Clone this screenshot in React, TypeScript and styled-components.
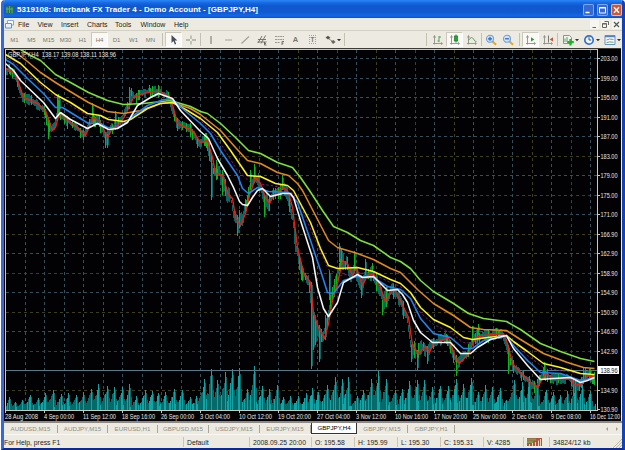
import type { ReactNode } from "react";
import styled, { createGlobalStyle } from "styled-components";

type Point = [number, number];

const timeframes = ["M1", "M5", "M15", "M30", "H1", "H4", "D1", "W1", "MN"];
const menus = [
  { name: "File", width: 19.5 },
  { name: "View", width: 23.5 },
  { name: "Insert", width: 26 },
  { name: "Charts", width: 28 },
  { name: "Tools", width: 25.5 },
  { name: "Window", width: 33.5 },
  { name: "Help", width: 20 },
];
const tabs = [
  { name: "AUDUSD,M15", width: 54 },
  { name: "AUDJPY,M15", width: 50 },
  { name: "EURUSD,H1", width: 50 },
  { name: "GBPUSD,M15", width: 51 },
  { name: "USDJPY,M15", width: 51 },
  { name: "EURJPY,M15", width: 51 },
  { name: "GBPJPY,H4", width: 46 },
  { name: "GBPJPY,M15", width: 51 },
  { name: "GBPJPY,H1", width: 47 },
];
const prices = [
  "203.00", "199.00", "195.00", "191.00", "187.00", "183.00", "179.00",
  "175.00", "171.00", "166.90", "162.90", "158.90", "154.90", "150.90",
  "146.90", "142.90", "", "134.90", "130.90",
];
const dates = [
  "28 Aug 2008", "4 Sep 00:00", "11 Sep 12:00", "18 Sep 16:00",
  "26 Sep 00:00", "3 Oct 04:00", "10 Oct 12:00", "19 Oct 20:00",
  "27 Oct 04:00", "3 Nov 12:00", "10 Nov 16:00", "17 Nov 20:00",
  "25 Nov 00:00", "2 Dec 04:00", "9 Dec 08:00", "16 Dec 12:00",
];

const green: Point[] = [[20, 49], [30, 55], [40, 60], [55, 74], [70, 82], [88, 92], [107, 100], [123, 104], [143, 103], [170, 100], [190, 106], [200, 111], [207, 113], [220, 123], [235, 137], [248, 150], [260, 153], [277, 162], [292, 167], [300, 177], [309, 190], [322, 210], [333, 226], [347, 232], [360, 240], [373, 245], [390, 257], [400, 261], [410, 268], [420, 280], [433, 291], [453, 303], [468, 313], [483, 318], [506, 321], [520, 329], [540, 343], [560, 351], [580, 358], [594, 361]];
const orange: Point[] = [[11, 49], [27, 61], [40, 72], [55, 82], [68, 90], [88, 102], [107, 111], [123, 113], [140, 110], [160, 103], [172, 102], [190, 108], [200, 114], [220, 130], [235, 147], [247, 160], [260, 163], [277, 172], [288, 175], [297, 183], [302, 190], [315, 215], [328, 240], [337, 247], [357, 253], [373, 259], [390, 268], [400, 272], [417, 289], [433, 303], [453, 315], [470, 327], [483, 329], [506, 330], [520, 339], [543, 353], [567, 362], [583, 367], [594, 368]];
const yellow: Point[] = [[5, 54], [20, 63], [40, 82], [55, 94], [70, 102], [87, 113], [100, 115], [108, 119], [123, 121], [130, 119], [147, 108], [160, 103], [172, 102], [187, 110], [200, 118], [217, 132], [230, 150], [247, 175], [260, 176], [275, 183], [287, 185], [293, 190], [310, 222], [320, 248], [328, 265], [337, 268], [357, 267], [373, 271], [390, 279], [400, 283], [410, 292], [420, 307], [433, 319], [450, 327], [463, 337], [472, 339], [487, 337], [506, 335], [513, 341], [527, 351], [543, 363], [560, 367], [580, 373], [594, 374]];
const violet: Point[] = [[5, 56], [20, 67], [55, 97], [70, 105], [90, 117], [115, 124], [125, 122], [147, 107], [162, 101], [172, 101], [187, 110], [200, 120], [215, 135], [237, 170], [250, 182], [270, 185], [288, 188], [300, 205], [315, 240], [328, 269], [340, 275], [357, 272], [373, 274], [390, 282], [400, 286], [420, 312], [433, 324], [450, 332], [463, 342], [475, 343], [506, 336], [527, 355], [543, 367], [560, 370], [594, 375]];
const blue: Point[] = [[5, 59], [13, 64], [27, 78], [43, 93], [55, 107], [62, 107], [88, 123], [100, 123], [107, 127], [117, 127], [123, 124], [133, 115], [147, 105], [163, 99], [172, 99], [183, 109], [200, 123], [210, 133], [220, 150], [237, 175], [242, 188], [248, 193], [257, 187], [268, 191], [288, 192], [297, 202], [310, 240], [320, 270], [327, 292], [333, 293], [343, 280], [357, 276], [373, 277], [387, 286], [400, 289], [410, 298], [420, 318], [433, 333], [450, 337], [463, 348], [472, 348], [483, 340], [500, 336], [506, 336], [513, 345], [527, 360], [540, 372], [560, 373], [580, 380], [594, 377]];
const white: Point[] = [[5, 63], [13, 70], [20, 80], [43, 102], [55, 118], [60, 112], [70, 119], [87, 128], [97, 123], [108, 129], [117, 128], [127, 122], [137, 105], [150, 97], [158, 93], [172, 98], [180, 110], [200, 131], [208, 138], [217, 158], [227, 175], [233, 187], [239, 201], [242, 204], [247, 205], [252, 197], [257, 190], [262, 188], [270, 196], [282, 193], [290, 193], [293, 197], [300, 220], [312, 257], [317, 287], [323, 308], [328, 316], [337, 302], [343, 282], [357, 274], [362, 277], [373, 276], [387, 290], [397, 289], [402, 294], [407, 302], [413, 320], [420, 332], [432, 342], [450, 342], [460, 353], [470, 353], [477, 347], [490, 339], [506, 335], [513, 348], [527, 365], [540, 379], [553, 378], [570, 377], [580, 382], [587, 380], [594, 377]];
const red: Point[] = [[5, 68], [15, 73], [23, 97], [37, 103], [45, 110], [52, 130], [55, 127], [59, 112], [67, 120], [77, 127], [85, 135], [93, 117], [100, 122], [107, 137], [112, 128], [120, 123], [127, 110], [133, 97], [143, 93], [153, 91], [160, 91], [170, 97], [177, 123], [183, 126], [192, 130], [200, 142], [207, 140], [212, 157], [215, 173], [222, 175], [228, 194], [232, 198], [235, 217], [240, 225], [245, 213], [249, 195], [255, 177], [260, 183], [265, 197], [269, 203], [273, 195], [283, 187], [288, 192], [292, 207], [297, 247], [303, 272], [310, 282], [313, 313], [318, 327], [324, 338], [328, 323], [332, 300], [337, 283], [342, 260], [347, 263], [352, 275], [356, 267], [362, 285], [367, 275], [373, 273], [380, 287], [385, 301], [393, 288], [400, 300], [408, 317], [412, 345], [418, 353], [425, 346], [429, 352], [433, 343], [448, 337], [455, 357], [459, 363], [468, 353], [475, 337], [483, 335], [503, 333], [507, 343], [512, 363], [520, 372], [528, 380], [537, 387], [545, 373], [555, 379], [570, 377], [574, 385], [582, 383], [587, 375], [594, 377]];

// single long wicks: x, top, bottom
const spikes = [
  [48, 117, 139], [49, 120, 132], [57, 96, 118], [58, 94, 114], [59, 96, 112], [92, 103, 122],
  [105, 134, 148], [107, 134, 148], [115, 111, 124], [129, 87, 103], [131, 88, 96],
  [149, 85, 92], [211, 160, 200], [216, 160, 180], [222, 170, 195], [237, 215, 236], [239, 210, 228],
  [250, 170, 190], [254, 164, 178], [264, 195, 217], [282, 175, 190],
  [311, 282, 369], [313, 315, 350], [315, 320, 345], [319, 325, 362], [325, 315, 340],
  [329, 270, 300], [339, 243, 262], [341, 248, 266], [354, 251, 266], [361, 285, 298],
  [365, 259, 275], [372, 263, 272], [382, 300, 315], [411, 345, 362], [417, 350, 371], [427, 352, 364],
  [456, 362, 376], [472, 326, 342], [478, 324, 335], [508, 345, 374], [529, 376, 391],
  [537, 386, 396], [544, 362, 374], [573, 380, 396], [583, 367, 384], [585, 368, 380], [590, 368, 376],
];

const volumePeaks: Point[] = [[5, 5], [9, 13], [15, 8], [22, 10], [30, 15], [38, 12], [45, 17], [53, 20], [61, 16], [68, 17], [76, 15], [83, 18], [91, 21], [98, 26], [107, 24], [114, 23], [122, 23], [129, 26], [136, 14], [145, 20], [152, 19], [158, 17], [165, 18], [174, 21], [182, 20], [190, 13], [196, 14], [204, 31], [211, 41], [217, 30], [225, 38], [232, 41], [239, 42], [247, 21], [254, 44], [262, 24], [269, 21], [277, 25], [283, 13], [290, 14], [298, 14], [306, 17], [312, 22], [318, 18], [327, 25], [335, 33], [342, 31], [348, 33], [357, 14], [363, 20], [371, 31], [378, 39], [386, 31], [395, 20], [402, 21], [409, 29], [417, 30], [424, 30], [432, 23], [440, 24], [448, 24], [456, 31], [463, 26], [471, 32], [478, 18], [485, 25], [492, 23], [500, 22], [506, 10], [514, 30], [522, 28], [529, 29], [537, 31], [546, 20], [553, 18], [560, 15], [567, 19], [575, 25], [582, 25], [590, 19], [597, 8]];

const noise = (n: number) => {
  const v = Math.sin(n * 127.1 + 11.7) * 43758.5453;
  return v - Math.floor(v);
};

const valueAt = (line: Point[], x: number) => {
  for (let i = 1; i < line.length; i++) {
    if (x <= line[i][0]) {
      const [x0, y0] = line[i - 1];
      const [x1, y1] = line[i];
      return y0 + ((x - x0) / (x1 - x0)) * (y1 - y0);
    }
  }
  return line[line.length - 1][1];
};

const toPoints = (line: Point[]) => line.map(([x, y]) => `${x + 0.5},${y + 0.5}`).join(" ");

const buildCandles = () => {
  let body = "";
  let wick = "";
  for (let x = 6; x < 595; x++) {
    const mid = valueAt(red, Math.min(x + 1.5, 594));
    const amp = x < 200 ? 5 : x < 430 ? 8 : 5.5;
    // neighbouring bars share their range so that bodies read as two pixels wide
    const n = Math.floor(x / 2);
    const top = Math.round(mid - 1 - noise(n) * amp);
    const bottom = Math.round(mid + 1 + noise(n + 700) * amp);
    if (noise(x + 300) > 0.8) wick += `M${x + 0.5} ${top - 1}V${bottom + 2}`;
    else body += `M${x + 0.5} ${top}V${bottom}`;
  }
  spikes.forEach(([x, y0, y1]) => {
    wick += `M${x + 0.5} ${y0}V${y1}`;
    body += `M${x + 1.5} ${y0 + 3}V${y1 - 3}`;
  });
  return { body, wick };
};

const buildVolume = () => {
  let dark = "";
  let light = "";
  for (let i = 1; i < volumePeaks.length; i++) {
    const [x0, h0] = volumePeaks[i - 1];
    const [x1, h1] = volumePeaks[i];
    for (let x = x0 + 1; x <= x1; x++) {
      if (x > 595) break;
      const t = (x - x0) / (x1 - x0);
      const h = x === x1 ? h1 : h1 * (0.12 + 0.72 * t * t + noise(x) * 0.15) + 1;
      const seg = `M${x + 0.5} 410V${Math.round(410 - h)}`;
      if (x === x1 || noise(x + 50) > 0.72) light += seg;
      else dark += seg;
      if (x === x0 + 1) dark += `M${x + 0.5} 410V${Math.round(410 - h0 * 0.86)}`;
      if (x === x0 + 2) dark += `M${x + 0.5} 410V${Math.round(410 - h0 * 0.5)}`;
    }
  }
  return { dark, light };
};

const candles = buildCandles();
const volume = buildVolume();

const GlobalStyle = createGlobalStyle`
  body {
    margin: 0;
    background: #fff;
    overflow: hidden;
    font-family: "Liberation Sans", Arial, sans-serif;
  }
`;

const Chart = () => {
  const rows = prices.map((_, i) => Math.round(58 + i * 19.5));
  const cols = Array.from({ length: 30 }, (_, i) => Math.floor(25 + i * 19.5));
  return (
    <ChartSvg viewBox="4 48 617 373" width="617" height="373">
      <rect x="4" y="48" width="617" height="373" fill="#020204" />
      <g fill="none" strokeWidth="1" strokeDasharray="3 3" shapeRendering="crispEdges">
        {rows.slice(0, 18).map((y, i) => (
          <path key={y} d={`M6 ${y + 0.5}H597`} stroke={i > 4 && i % 2 ? "#3e3e1a" : "#35505a"} />
        ))}
        {cols.map((x, i) => (
          <path key={x} d={`M${x + 0.5} 50V410`} stroke={i > 12 && i % 2 === 0 ? "#40401c" : "#35505a"} />
        ))}
      </g>
      <g fill="none" strokeWidth="1" shapeRendering="crispEdges">
        <path d={volume.dark} stroke="#056a6a" />
        <path d={volume.light} stroke="#12a3a5" />
        <path d="M5 370.5H597" stroke="#587a88" />
        <path d={candles.body} stroke="#0b6763" />
        <path d={candles.wick} stroke="#0eb41f" />
      </g>
      <g fill="none" strokeWidth="1.55" strokeLinejoin="round">
        <polyline points={toPoints(violet)} stroke="#7b1a74" strokeDasharray="2.5 2" strokeWidth="1" />
        <polyline points={toPoints(red)} stroke="#ee1c16" strokeWidth="1.4" />
        <polyline points={toPoints(green)} stroke="#7fe03c" />
        <polyline points={toPoints(orange)} stroke="#e08a1c" />
        <polyline points={toPoints(yellow)} stroke="#fbf022" />
        <polyline points={toPoints(blue)} stroke="#2484ee" />
        <polyline points={toPoints(white)} stroke="#f6f6f6" />
      </g>
      <g fill="none" strokeWidth="1" shapeRendering="crispEdges">
        <path d="M5 49.5H597.5V410.5H5.5V50" stroke="#c9c9bd" />
        {rows.map((y) => (
          <path key={y} d={`M598 ${y + 0.5}h2`} stroke="#c9c9bd" />
        ))}
        {dates.map((d, i) => (
          <path key={d} d={`M${Math.floor(5 + i * 39) + 0.5} 411v2`} stroke="#c9c9bd" />
        ))}
        <path d="M4 48.5H621" stroke="#3c3c38" />
      </g>
      <g fill="#e6e6e2" fontSize="6.8" fontFamily='"Liberation Sans", Arial, sans-serif'>
        <text x="8" y="57" textLength="108" lengthAdjust="spacingAndGlyphs">
          GBPJPY,H4&#160; 138.17 139.08 138.11 138.96
        </text>
        {prices.map((p, i) =>
          p ? (
            <text key={p} x="600.5" y={rows[i] + 2.8} textLength="17" lengthAdjust="spacingAndGlyphs">
              {p}
            </text>
          ) : null
        )}
        {dates.map((d, i) => (
          <text
            key={d}
            x={5 + i * 39}
            y="418.5"
            textLength={(d.length === 11 && i) || i === 15 ? 30 : 33}
            lengthAdjust="spacingAndGlyphs"
          >
            {d}
          </text>
        ))}
      </g>
      <rect x="598" y="366" width="21" height="8" fill="#fff" />
      <text
        x="600.5"
        y="372.7"
        fontSize="6.8"
        fill="#111"
        fontFamily='"Liberation Sans", Arial, sans-serif'
        textLength="17"
        lengthAdjust="spacingAndGlyphs"
      >
        138.96
      </text>
    </ChartSvg>
  );
};

const Icon = ({ children, width = 14 }: { children: ReactNode; width?: number }) => (
  <svg width={width} height="12" viewBox={`0 0 ${width} 12`} fill="none">
    {children}
  </svg>
);

const AxisMark = () => <path d="M3.5 2v8.5M2 9.5h9M2.5 3.5l1-2 1 2M10 8.3l1.5 1.2-1.5 1.2" stroke="#8f9088" strokeWidth=".9" />;

const Lens = ({ plus }: { plus?: boolean }) => (
  <Icon>
    <path d="M8.5 7.5l3.6 3.2" stroke="#dba72d" strokeWidth="2" />
    <circle cx="6" cy="4.8" r="3.5" fill="#cfe4fb" stroke="#76a0d8" strokeWidth="1.1" />
    <path d={plus ? "M4 4.8h4M6 2.8v4" : "M4 4.8h4"} stroke="#2c62b4" strokeWidth="1.2" />
  </Icon>
);

const App = () => {
  return (
    <>
      <GlobalStyle />
      <Window>
        <TitleBar>
          <svg width="9" height="10" viewBox="0 0 9 10">
            <rect x="0.5" y="1" width="8" height="8" rx="1" fill="#2b6e58" />
            <path d="M2 2v6M4.5 1v7M7 2.5v6M1 4h7" stroke="#51b558" />
          </svg>
          <Title>5319108: Interbank FX Trader 4 - Demo Account - [GBPJPY,H4]</Title>
          <WindowButton>
            <path d="M2.5 8.5h4" stroke="#fff" strokeWidth="1.6" />
          </WindowButton>
          <WindowButton>
            <path d="M2.5 3.5h6v5.5h-6zM2.5 4h6" stroke="#fff" />
          </WindowButton>
          <WindowButton $close>
            <path d="M3 3.2l5 5.6M8 3.2l-5 5.6" stroke="#fff" strokeWidth="1.4" />
          </WindowButton>
        </TitleBar>

        <MenuBar>
          <svg width="10" height="10" viewBox="0 0 10 10" fill="none">
            <path d="M2.5 1.5h6v4.5h-6z" fill="#fff" stroke="#7fa6df" />
            <path d="M.5 4.5h6v4.5h-6z" fill="#e7f0fc" stroke="#5f91d8" />
          </svg>
          <MenuList>
            {menus.map((m) => (
              <MenuItem key={m.name} $width={m.width}>
                {m.name}
              </MenuItem>
            ))}
          </MenuList>
          <MdiButton>
            <path d="M2.5 7.5h3.5" stroke="#66665f" />
          </MdiButton>
          <MdiButton>
            <path d="M3.5 1.5h4v3.5M1.5 3.5h4v4h-4zM1.5 4h4" stroke="#66665f" />
          </MdiButton>
          <MdiButton>
            <path d="M2 2l5 5M7 2l-5 5" stroke="#55554f" strokeWidth="1.2" />
          </MdiButton>
        </MenuBar>

        <ToolBar>
          {timeframes.map((t) => (
            <Tool key={t} $active={t === "H4"}>
              {t}
            </Tool>
          ))}
          <Grip $width={6} />
          <Tool $active>
            <Icon>
              <path d="M4.5 1v8l2-2 1.3 3.5 1.4-.6-1.4-3.3h2.6z" fill="#474d5a" />
            </Icon>
          </Tool>
          <Tool>
            <Icon>
              <path d="M7 1.5v3.5M7 7v3.5M2 6h4M8 6h4" stroke="#a9a99f" strokeWidth="1.3" />
            </Icon>
          </Tool>
          <Grip $width={3} />
          <Tool>
            <Icon>
              <path d="M7 2v8" stroke="#85857c" strokeWidth="1.2" />
            </Icon>
          </Tool>
          <Tool>
            <Icon>
              <path d="M4 6h7" stroke="#a5a299" strokeWidth="1.2" />
            </Icon>
          </Tool>
          <Tool>
            <Icon>
              <path d="M3.5 9.5l7.5-7" stroke="#a5a299" strokeWidth="1.2" />
            </Icon>
          </Tool>
          <Tool>
            <Icon>
              <path d="M3 9l4-7M6 9.5l4.5-8M3 5.5h8M2.5 8h7" stroke="#77776d" />
              <path d="M11.5 8h-2v3h2M9.5 9.5h1.5" stroke="#55554f" strokeWidth=".8" />
            </Icon>
          </Tool>
          <Tool>
            <Icon>
              <path d="M3 2.5h9M3 5.5h9M3 8.5h5" stroke="#98988c" strokeDasharray="2 .6" />
              <path d="M10 11V7.5h2M10 9.2h1.5" stroke="#66665c" strokeWidth=".9" />
            </Icon>
          </Tool>
          <Tool $glyph>A</Tool>
          <Tool $glyph>
            <Boxed>T</Boxed>
          </Tool>
          <Tool $width={21}>
            <Icon width={18}>
              <path d="M2.5 3.5L5 1.8l2.5 2L5 5.5z" fill="#55554f" />
              <path d="M6 5l4.5 3" stroke="#8a8a80" />
              <path d="M8 7.5L10.5 6l2 2-2.5 2z" fill="#66665f" />
              <path d="M14 5h4l-2 2.2z" fill="#333" />
            </Icon>
          </Tool>
          <Grip $width={5} />
          <Spacer />
          <Grip $width={6} />
          <Tool>
            <Icon>
              <AxisMark />
              <path d="M8 2v6M8 3h2M6.5 7H8" stroke="#58a05b" />
            </Icon>
          </Tool>
          <Tool $active>
            <Icon>
              <AxisMark />
              <path d="M8 .5v8" stroke="#247a2d" />
              <rect x="6.3" y="2" width="3.4" height="5" fill="#24a53b" stroke="#247a2d" strokeWidth=".7" />
            </Icon>
          </Tool>
          <Tool>
            <Icon>
              <AxisMark />
              <path d="M3.5 6.5q3-5 5-1.5t3 2.5" stroke="#669c62" />
            </Icon>
          </Tool>
          <Grip $width={2} />
          <Tool>
            <Lens plus />
          </Tool>
          <Tool>
            <Lens />
          </Tool>
          <Grip $width={6} />
          <Tool $active>
            <Icon>
              <AxisMark />
              <path d="M7 3.2v4.4l3.4-2.2z" fill="#2f9b41" />
            </Icon>
          </Tool>
          <Tool>
            <Icon>
              <AxisMark />
              <path d="M7.5 1.5v7" stroke="#777970" />
              <path d="M12 3.2v4.4L8.6 5.4z" fill="#c4573f" />
            </Icon>
          </Tool>
          <Grip $width={3} />
          <Tool $width={21}>
            <Icon width={18}>
              <path d="M2.5 1.5h6l2 2v6h-8z" fill="#eef3ee" stroke="#85978a" />
              <path d="M4 8V4.5M6 8V3" stroke="#59a35f" />
              <path d="M9.5 5v6.5M6.2 8.2h6.6" stroke="#20b12c" strokeWidth="2.2" />
              <path d="M14 5h4l-2 2.2z" fill="#333" />
            </Icon>
          </Tool>
          <Tool $width={21}>
            <Icon width={18}>
              <circle cx="7" cy="6" r="4.2" fill="#eef5ff" stroke="#3471cb" strokeWidth="1.7" />
              <path d="M7 3.2V6h2.2" stroke="#40516e" />
              <path d="M14 5h4l-2 2.2z" fill="#333" />
            </Icon>
          </Tool>
          <Tool $width={21}>
            <Icon width={18}>
              <path d="M2 1.5h10v9H2z" fill="#f4faff" stroke="#6792c4" />
              <path d="M2 2.5h10" stroke="#4c83c9" strokeWidth="1.5" />
              <path d="M3.5 6l3-1 4 .5" stroke="#c47c62" />
              <path d="M3.5 8.7l3-.8 4 .4" stroke="#65a367" />
              <path d="M14 5h4l-2 2.2z" fill="#333" />
            </Icon>
          </Tool>
        </ToolBar>

        <Chart />

        <TabBar>
          {tabs.map((t) => (
            <Tab key={t.name} $width={t.width} $active={t.name === "GBPJPY,H4"}>
              {t.name}
            </Tab>
          ))}
          <Spacer />
          <svg width="18" height="8" viewBox="0 0 18 8" fill="#a19f93">
            <path d="M4 2v4L2 4zM12 2v4l2-2z" />
          </svg>
        </TabBar>

        <StatusBar>
          <StatusCell $width={180}>For Help, press F1</StatusCell>
          <StatusCell $width={66}>Default</StatusCell>
          <StatusCell $width={62}>2008.09.25 20:00</StatusCell>
          <StatusCell $width={43}>O: 195.58</StatusCell>
          <StatusCell $width={43}>H: 195.99</StatusCell>
          <StatusCell $width={43}>L: 195.30</StatusCell>
          <StatusCell $width={43}>C: 195.31</StatusCell>
          <StatusCell $width={40}>V: 4285</StatusCell>
          <StatusCell $width={26}>
            <svg width="15" height="8" viewBox="0 0 15 8">
              <rect width="15" height="8" fill="#b0533f" />
              <path d="M0 1.5h9M0 4h6" stroke="#779c4a" strokeWidth="2" />
              <path d="M2.5 8V6M5.5 8V5M8.5 8V4M11.5 8V2.5M13.5 8V1" stroke="#e3d6b7" />
            </svg>
          </StatusCell>
          <StatusCell $width={56}>34824/12 kb</StatusCell>
          <Spacer />
          <SizeGrip width="9" height="9" viewBox="0 0 9 9">
            <path d="M0 9l9-9M3 9l6-6M6 9l3-3" stroke="#bdb9a6" />
          </SizeGrip>
        </StatusBar>
      </Window>
    </>
  );
};

const Window = styled.div`
  box-sizing: border-box;
  display: flex;
  flex-direction: column;
  width: 624px;
  height: 450px;
  margin-left: 1px;
  border: solid #1243b8;
  border-width: 0 3px 2px 3px;
  border-left-color: #3269dc;
  border-bottom-color: #0a2a9c;
  border-radius: 4px 4px 0 0;
  background: #edebe1;
  overflow: hidden;
`;

const TitleBar = styled.div`
  display: flex;
  align-items: center;
  box-sizing: border-box;
  height: 18px;
  flex: none;
  gap: 3px;
  padding: 2px 0 0 1px;
  background: linear-gradient(#2a86f4 0, #1767e4 3px, #0f58cc 6px, #1059cf 12px, #1467e8 16px, #0e4cb4 18px);
`;

const Title = styled.span`
  flex: 1;
  font-size: 8px;
  line-height: 12px;
  font-weight: bold;
  letter-spacing: 0.06px;
  color: #fff;
  white-space: nowrap;
`;

const WindowButton = styled.svg.attrs({ viewBox: "0 0 11 12", fill: "none" })<{ $close?: boolean }>`
  box-sizing: border-box;
  width: 11px;
  height: 12px;
  border-radius: 2px;
  box-shadow: inset 0 0 0 1px ${({ $close }) => ($close ? "#e9b5a5" : "#7ea6ee")};
  background: ${({ $close }) => ($close ? "#cf5638" : "#3569d4")};
`;

const MenuBar = styled.div`
  display: flex;
  align-items: center;
  flex: none;
  height: 12px;
  padding: 0 1px;
  border-bottom: 1px solid #d3d0c4;
`;

const MenuList = styled.div`
  display: flex;
  flex: 1;
  padding-left: 3px;
`;

const MenuItem = styled.span<{ $width: number }>`
  width: ${({ $width }) => $width}px;
  font-size: 7px;
  line-height: 11px;
  color: #1c1c1a;
`;

const MdiButton = styled.svg.attrs({ viewBox: "0 0 9 9", fill: "none" })`
  width: 9px;
  height: 9px;
  margin-left: 2px;
  background: #f6f5f0;
`;

const ToolBar = styled.div`
  display: flex;
  align-items: center;
  flex: none;
  height: 17px;
  padding-left: 2px;
`;

const Tool = styled.div<{ $active?: boolean; $width?: number; $glyph?: boolean }>`
  display: flex;
  align-items: center;
  justify-content: center;
  box-sizing: border-box;
  width: ${({ $width = 17 }) => $width}px;
  height: 15px;
  flex: none;
  font-size: ${({ $glyph }) => ($glyph ? 7.5 : 6)}px;
  font-weight: ${({ $glyph }) => ($glyph ? "bold" : "normal")};
  color: #77766c;
  background: ${({ $active }) => ($active ? "#f9f8f5" : "transparent")};
  border: 1px solid ${({ $active }) => ($active ? "#cbc8bc" : "transparent")};
  border-right-color: ${({ $active }) => ($active ? "#fff" : "transparent")};
  border-bottom-color: ${({ $active }) => ($active ? "#fff" : "transparent")};
`;

const Boxed = styled.span`
  font-size: 6.5px;
  line-height: 7px;
  padding: 0 1px;
  border: 1px dotted #a5a499;
`;

const Grip = styled.i<{ $width: number }>`
  flex: none;
  width: ${({ $width }) => $width}px;
  height: 13px;
  background: linear-gradient(#c4c1b3, #c4c1b3) center / 1px 100% no-repeat;
`;

const Spacer = styled.div`
  flex: 1;
`;

const ChartSvg = styled.svg`
  display: block;
  flex: none;
`;

const TabBar = styled.div`
  display: flex;
  align-items: center;
  box-sizing: border-box;
  flex: none;
  height: 14px;
  border-top: 2px solid #8c8a82;
  border-bottom: 1px solid #f8f7f2;
`;

const Tab = styled.div<{ $width: number; $active?: boolean }>`
  box-sizing: border-box;
  width: ${({ $width }) => $width}px;
  height: ${({ $active }) => ($active ? 11 : 8)}px;
  line-height: ${({ $active }) => ($active ? 10 : 8)}px;
  font-size: 6.2px;
  text-align: center;
  white-space: nowrap;
  color: ${({ $active }) => ($active ? "#000" : "#8f8c80")};
  background: ${({ $active }) => ($active ? "#fff" : "transparent")};
  border: solid ${({ $active }) => ($active ? "#33332f" : "#a9a69a")};
  border-width: ${({ $active }) => ($active ? "0 1px 1px 1px" : "0 1px 0 0")};
`;

const StatusBar = styled.div`
  display: flex;
  align-items: center;
  flex: 1;
  padding-top: 1px;
`;

const StatusCell = styled.div<{ $width: number }>`
  display: flex;
  align-items: center;
  box-sizing: border-box;
  width: ${({ $width }) => $width}px;
  height: 10px;
  font-size: 6.8px;
  white-space: nowrap;
  color: #1e1e1c;
  padding-left: 3px;
  border-right: 1px solid #c9c6b8;
  &:first-child {
    padding-left: 0;
  }
  &:nth-last-child(3) {
    border-right: 0;
  }
`;

const SizeGrip = styled.svg`
  align-self: flex-end;
`;

export default App;
